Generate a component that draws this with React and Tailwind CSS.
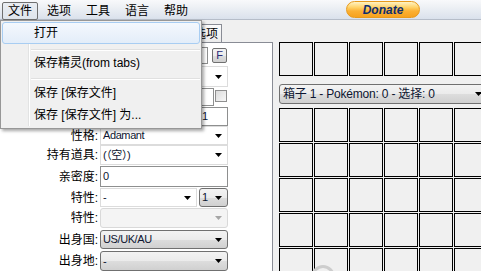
import React from 'react';

const GRAD = 'bg-[linear-gradient(to_bottom,#f3f3f3_0%,#ebebeb_50%,#dddddd_51%,#d0d0d0_100%)]';

function Arrow({ light }) {
  return (
    <svg width="7" height="4" viewBox="0 0 7 4" className="shrink-0">
      <path d="M0 0h7L3.5 4z" fill={light ? '#a6a6a6' : '#000'} />
    </svg>
  );
}

function Row({ label, className = '', children }) {
  return (
    <div className={`flex items-stretch ${className}`}>
      <div className="w-[100px] shrink-0 flex items-center justify-end pr-[2px] text-[12px] leading-none text-black">
        {label}
      </div>
      {children}
    </div>
  );
}

function Combo({ value, w = 'w-[128px]', kind = 'white' }) {
  const look =
    kind === 'white'
      ? 'border border-[#dcdcdc] bg-white'
      : kind === 'disabled'
      ? 'border border-[#d9d9d9] rounded-[3px] bg-[#f4f4f4]'
      : `border border-[#707070] rounded-[3px] ${GRAD}`;
  return (
    <div className={`${w} shrink-0 flex items-center justify-between pl-[2px] pr-[5px] ${look}`}>
      <span className="text-[11px] tracking-[-0.4px] leading-none text-[#0d1530]">{value}</span>
      <Arrow light={kind === 'disabled'} />
    </div>
  );
}

function TextBox({ value = '', w = 'w-[128px]' }) {
  return (
    <div className={`${w} shrink-0 flex items-center pl-[2px] border border-[#8e8f8f] bg-white`}>
      <span className="text-[11px] leading-none text-[#0d1530]">{value}</span>
    </div>
  );
}

const MENU = ['文件', '选项', '工具', '语言', '帮助'];

export default function App() {
  return (
    <div className="relative w-[481px] h-[271px] overflow-hidden bg-[#f0f0f0] font-['Liberation_Sans','Noto_Sans_CJK_SC',sans-serif] text-black">
      {/* menu bar */}
      <div className="h-[20px] flex items-start border-b border-[#b6bdc9] bg-[linear-gradient(to_bottom,#f8f9fb_0%,#eef1f5_35%,#dae1ec_100%)]">
        <div className="flex pt-[2px] pl-[2px]">
          {MENU.map((m, i) => (
            <div
              key={m}
              className={`h-[18px] px-[5px] mr-[3px] flex items-center text-[12px] leading-none border rounded-[2px] ${
                i === 0 ? 'border-[#6f6f6f] bg-[linear-gradient(to_bottom,#e9edf2,#dfe5ec)]' : 'border-transparent'
              }`}
            >
              {m}
            </div>
          ))}
        </div>
        <div className="ml-auto mr-[61px] mt-[1px] w-[74px] h-[17px] rounded-full border border-[#e89a1c] bg-[linear-gradient(to_bottom,#fff3c4_0%,#ffd36b_35%,#fbb034_60%,#f7a21f_100%)] flex items-center justify-center">
          <span className="text-[12px] font-bold italic leading-none text-[#0e2e6e]">Donate</span>
        </div>
      </div>

      <div className="flex h-[251px]">
        {/* left tab control */}
        <div className="w-[273px] shrink-0 flex flex-col">
          <div className="h-[22px] flex items-end pl-[2px]">
            {[
              ['', 'w-[56px]'],
              ['', 'w-[54px]'],
              ['', 'w-[54px]'],
              ['其他选项', 'w-[56px]'],
            ].map(([t, w], i) => (
              <div
                key={i}
                className={`${w} h-[18px] flex items-center justify-end pr-[3px] border border-b-0 border-[#898c95] bg-[linear-gradient(to_bottom,#fbfbfb,#ececec)] text-[12px] leading-none`}
              >
                {t}
              </div>
            ))}
          </div>
          <div className="flex-1 bg-white border-t border-r border-[#898c95] flex flex-col">
            <Row label="" className="mt-[4px] h-[17px]">
              <TextBox w="w-[108px]" />
              <div className={`ml-[4px] mt-[1px] w-[15px] h-[15px] rounded-[2px] border border-[#707070] ${GRAD} flex items-center justify-center text-[11px] leading-none text-[#2a2a78]`}>
                F
              </div>
            </Row>
            <Row label="" className="mt-[2px] h-[21px]">
              <Combo value="" />
            </Row>
            <Row label="" className="mt-[1px] h-[18px]">
              <TextBox w="w-[114px]" />
              <div className="ml-[1px] mt-[2px] w-[12px] h-[12px] border border-[#8f8f8f] bg-[linear-gradient(135deg,#dcdcdc,#f7f7f7)]" />
            </Row>
            <Row label="" className="mt-[1px] h-[19px]">
              <TextBox w="w-[97px]" />
              <div className="ml-[2px]">
                <TextBox value="1" w="w-[29px] h-full" />
              </div>
            </Row>
            <Row label="性格:" className="h-[19px]">
              <Combo value="Adamant" />
            </Row>
            <Row label="持有道具:" className="h-[20px]">
              <Combo value="(（空）)" />
            </Row>
            <Row label="亲密度:" className="mt-[1px] h-[21px]">
              <TextBox value="0" />
            </Row>
            <Row label="特性:" className="mt-[1px] h-[19px]">
              <Combo value="-" w="w-[97px]" />
              <div className="ml-[2px] flex">
                <Combo value="1" w="w-[29px]" kind="grad" />
              </div>
            </Row>
            <Row label="特性:" className="mt-[1px] h-[20px]">
              <Combo value="" kind="disabled" />
            </Row>
            <Row label="出身国:" className="mt-[2px] h-[19px]">
              <Combo value="US/UK/AU" kind="grad" />
            </Row>
            <Row label="出身地:" className="mt-[2px] h-[20px]">
              <Combo value="-" kind="grad" />
            </Row>
          </div>
        </div>

        {/* right: party + box */}
        <div className="flex-1 min-w-0 pl-[6px] pt-[22px] flex flex-col">
          <div className="grid grid-cols-[repeat(6,34px)] gap-[1px]">
            {Array.from({ length: 6 }).map((_, i) => (
              <div key={i} className="h-[34px] border border-black bg-[#f0f0f0]" />
            ))}
          </div>
          <div className={`mt-[8px] w-[210px] h-[20px] shrink-0 flex items-center justify-between pl-[3px] pr-[6px] border border-[#707070] rounded-[3px] ${GRAD}`}>
            <span className="text-[12px] leading-none tracking-[-0.2px] text-[#0d1530]">箱子 1 - Pokémon: 0 - 选择: 0</span>
            <Arrow />
          </div>
          <div className="mt-[4px] grid grid-cols-[repeat(6,34px)] gap-[1px]">
            {Array.from({ length: 30 }).map((_, i) => (
              <div key={i} className="h-[34px] border border-black bg-[#f0f0f0]" />
            ))}
          </div>
        </div>
      </div>

      <div className="absolute left-[311px] top-[265px] w-[24px] h-[24px] rounded-full border-[3px] border-[#cdcdcd]" />

      {/* open file menu */}
      <div className="absolute left-0 top-[20px] w-[202px] h-[109px] bg-[#f0f0f0] border border-[#979797] shadow-[2px_2px_3px_rgba(0,0,0,0.35)] pt-[1px] px-[1px]">
        <div className="absolute left-[27px] top-[2px] bottom-[2px] w-[2px] border-l border-[#e2e3e3] border-r border-r-white" />
        <div className="relative h-[22px] flex items-center pl-[31px] rounded-[3px] border border-[#a8cdf2] bg-[linear-gradient(to_bottom,#f4f8fd,#e3edf9)] text-[12px] leading-none">
          打开
        </div>
        <div className="relative h-[8px] pt-[5px] pl-[29px]">
          <div className="w-full h-[2px] border-t border-[#e0e0e0] border-b border-b-white" />
        </div>
        <div className="relative h-[22px] flex items-center pl-[32px] text-[12px] leading-none">保存精灵(from tabs)</div>
        <div className="relative h-[8px] pt-[4px] pl-[29px]">
          <div className="w-full h-[2px] border-t border-[#e0e0e0] border-b border-b-white" />
        </div>
        <div className="relative h-[22px] flex items-center pl-[32px] text-[12px] leading-none">保存 [保存文件]</div>
        <div className="relative h-[22px] flex items-center pl-[32px] text-[12px] leading-none">保存 [保存文件] 为...</div>
      </div>
    </div>
  );
}
